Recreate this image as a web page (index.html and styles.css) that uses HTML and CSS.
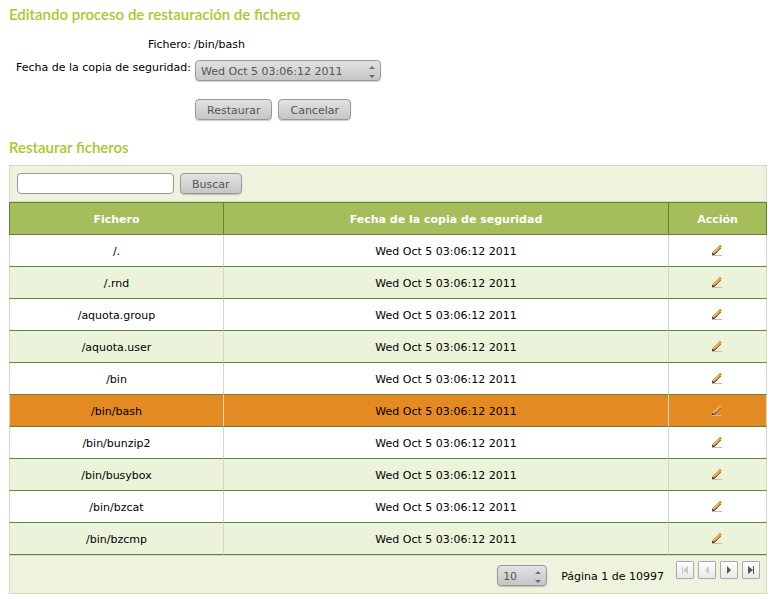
FILE: index.html
```html
<!DOCTYPE html>
<html lang="es">
<head>
    <meta charset="UTF-8">
    <meta name="viewport" content="width=device-width, initial-scale=1.0">
    <title>Restaurar ficheros</title>
    <link rel="stylesheet" href="styles.css">
</head>
<body>
    <svg class="sprite" aria-hidden="true">
        <symbol id="pencil" viewBox="0 0 12 12">
            <g shape-rendering="crispEdges">
                <path d="M1 11H11V12H1Z" fill="#bdbdbd"/>
                <path d="M1 8H2V7H3V6H4V5H5V4H6V3H7V2H8V3H9V4H10V5H9V6H8V7H7V8H6V9H5V10H4V11H1Z" fill="#d39a62"/>
                <path d="M2 8H3V7H4V6H5V5H6V4H7V3H8V4H7V5H6V6H5V7H4V8H3V9H2Z" fill="#efc591"/>
                <path d="M9 4H10V5H9V6H8V7H7V8H6V9H5V10H4V11H3V9H4V8H5V8H6V7H7V6H8V5H9Z" fill="#9a6238"/>
                <path d="M7 2H8V1H10V2H11V3H10V4H9V3H7Z" fill="#ff9a1e"/>
                <path d="M1 9H2V10H3V11H1Z" fill="#5c3a1c"/>
            </g>
        </symbol>
        <symbol id="arrows" viewBox="0 0 6 14">
            <path d="M0 4L3 1L6 4Z M0 10L3 13L6 10Z" fill="#6c6c6c"/>
        </symbol>
    </svg>

    <h2>Editando proceso de restauración de fichero</h2>
    <form class="restore-form">
        <span class="name">Fichero:</span>
        <span class="value">/bin/bash</span>
        <label class="name" for="backup-date">Fecha de la copia de seguridad:</label>
        <div class="select date-select">
            <select id="backup-date">
                <option>Wed Oct 5 03:06:12 2011</option>
            </select>
            <svg><use href="#arrows"/></svg>
        </div>
        <div class="form-buttons">
            <button type="button" class="btn">Restaurar</button>
            <button type="button" class="btn">Cancelar</button>
        </div>
    </form>

    <h2>Restaurar ficheros</h2>
    <form class="toolbar">
        <input type="text" class="search" aria-label="Buscar fichero">
        <button type="button" class="btn">Buscar</button>
    </form>
    <table class="files">
        <thead>
            <tr>
                <th class="col-file">Fichero</th>
                <th>Fecha de la copia de seguridad</th>
                <th class="col-action">Acción</th>
            </tr>
        </thead>
        <tbody>
            <tr><td>/.</td><td>Wed Oct 5 03:06:12 2011</td><td><a href="#" aria-label="Editar"><svg><use href="#pencil"/></svg></a></td></tr>
            <tr><td>/.rnd</td><td>Wed Oct 5 03:06:12 2011</td><td><a href="#" aria-label="Editar"><svg><use href="#pencil"/></svg></a></td></tr>
            <tr><td>/aquota.group</td><td>Wed Oct 5 03:06:12 2011</td><td><a href="#" aria-label="Editar"><svg><use href="#pencil"/></svg></a></td></tr>
            <tr><td>/aquota.user</td><td>Wed Oct 5 03:06:12 2011</td><td><a href="#" aria-label="Editar"><svg><use href="#pencil"/></svg></a></td></tr>
            <tr><td>/bin</td><td>Wed Oct 5 03:06:12 2011</td><td><a href="#" aria-label="Editar"><svg><use href="#pencil"/></svg></a></td></tr>
            <tr class="selected"><td>/bin/bash</td><td>Wed Oct 5 03:06:12 2011</td><td><a href="#" aria-label="Editar"><svg><use href="#pencil"/></svg></a></td></tr>
            <tr><td>/bin/bunzip2</td><td>Wed Oct 5 03:06:12 2011</td><td><a href="#" aria-label="Editar"><svg><use href="#pencil"/></svg></a></td></tr>
            <tr><td>/bin/busybox</td><td>Wed Oct 5 03:06:12 2011</td><td><a href="#" aria-label="Editar"><svg><use href="#pencil"/></svg></a></td></tr>
            <tr><td>/bin/bzcat</td><td>Wed Oct 5 03:06:12 2011</td><td><a href="#" aria-label="Editar"><svg><use href="#pencil"/></svg></a></td></tr>
            <tr><td>/bin/bzcmp</td><td>Wed Oct 5 03:06:12 2011</td><td><a href="#" aria-label="Editar"><svg><use href="#pencil"/></svg></a></td></tr>
        </tbody>
    </table>
    <div class="pager">
        <div class="select size-select">
            <select aria-label="Filas por página">
                <option>10</option>
            </select>
            <svg><use href="#arrows"/></svg>
        </div>
        <span class="page-info">Página 1 de 10997</span>
        <div class="page-buttons">
            <button type="button" aria-label="Primera" disabled><svg viewBox="0 0 16 16"><path d="M5 4H6V12H5Z M11 4V12L6 8Z"/></svg></button>
            <button type="button" aria-label="Anterior" disabled><svg viewBox="0 0 16 16"><path d="M10 4V12L6 8Z"/></svg></button>
            <button type="button" aria-label="Siguiente"><svg viewBox="0 0 16 16"><path d="M6 4V12L10 8Z"/></svg></button>
            <button type="button" aria-label="Última"><svg viewBox="0 0 16 16"><path d="M5 4V12L10 8Z M10 4H11V12H10Z"/></svg></button>
        </div>
    </div>
</body>
</html>
```

FILE: styles.css
```css
body {
    font-family: Verdana, "DejaVu Sans", sans-serif;
    font-size: 11px;
    line-height: 14px;
    color: #000;
    background-color: #fff;
    margin: 0;
    padding: 4px 5px 5px 9px;
}

.sprite {
    display: none;
}

h2 {
    font-family: "Trebuchet MS", Lato, sans-serif;
    font-size: 15px;
    font-weight: 600;
    line-height: 20px;
    color: #a6c92d;
    margin: 0;
}

.restore-form {
    display: grid;
    grid-template-columns: 182px 1fr;
    column-gap: 3px;
    padding: 13px 0 17px;
}

.restore-form .name,
.restore-form .value {
    padding-top: 1px;
}

.restore-form .name {
    text-align: right;
    white-space: nowrap;
}

.restore-form .value {
    margin-bottom: 8px;
}

.form-buttons {
    grid-column: 2;
    display: flex;
    gap: 6px;
    margin: 18px 0 0 1px;
}

.btn,
.select select {
    font-family: inherit;
    font-size: 11px;
    line-height: 14px;
    height: 21px;
    box-sizing: border-box;
    color: #555;
    background: linear-gradient(#e2e2e2, #c6c6c6);
    border: 1px solid #999;
    border-radius: 4px;
    box-shadow: 0 1px 1px rgba(0, 0, 0, 0.2);
    cursor: pointer;
}

.btn {
    padding: 2px 11px 0;
}

.select {
    position: relative;
}

.select select {
    appearance: none;
    width: 100%;
    margin: 0;
    padding: 2px 5px 0;
}

.select svg {
    position: absolute;
    top: 5px;
    right: 6px;
    width: 6px;
    height: 14px;
    pointer-events: none;
}

.date-select {
    width: 186px;
    height: 21px;
    margin-left: 1px;
}

.size-select {
    width: 50px;
    height: 21px;
}

.toolbar {
    display: flex;
    align-items: center;
    gap: 6px;
    margin-top: 8px;
    padding: 7px;
    background-color: #edf3dc;
    border: 1px solid #d5dcbc;
}

.search {
    font: inherit;
    width: 157px;
    height: 21px;
    box-sizing: border-box;
    margin: 0;
    padding: 0 4px;
    background-color: #fff;
    border: 1px solid #999;
    border-radius: 4px;
}

.files {
    width: 100%;
    table-layout: fixed;
    border-spacing: 0;
    text-align: center;
}

.files th,
.files td {
    height: 29px;
    padding: 2px 0 0;
    border-bottom: 1px solid #648235;
}

.files th {
    color: #fff;
    background-color: #a5bd5b;
    border-top: 1px solid #648235;
    border-left: 1px solid #648235;
}

.files td {
    border-left: 1px solid #d5d8bf;
}

.files th:last-child {
    border-right: 1px solid #648235;
}

.files td:last-child {
    padding: 0 2px 2px 0;
    border-right: 1px solid #d5d8bf;
}

.files .col-file {
    width: 213px;
}

.files .col-action {
    width: 97px;
}

.files tr:nth-child(even) td {
    background-color: #ebf4da;
}

.files tr.selected td {
    background-color: #e48a23;
}

.files svg {
    display: block;
    width: 12px;
    height: 12px;
    margin: 0 auto;
}

.pager {
    display: flex;
    justify-content: flex-end;
    padding: 3px 6px 5px;
    background-color: #edf3dc;
    border: 1px solid #d5dcbc;
}

.pager .size-select {
    margin-top: 6px;
}

.page-info {
    margin: 11px 12px 0 14px;
}

.page-buttons {
    display: flex;
    gap: 4px;
    height: 29px;
}

.page-buttons button {
    width: 18px;
    height: 18px;
    margin-top: 2px;
    padding: 0;
    background: linear-gradient(#fff, #e8e8e8);
    border: 1px solid #aaa;
    border-radius: 1px;
}

.page-buttons svg {
    display: block;
    width: 16px;
    height: 16px;
    fill: #555;
}

.page-buttons button:disabled svg {
    fill: #ccc;
}
```
